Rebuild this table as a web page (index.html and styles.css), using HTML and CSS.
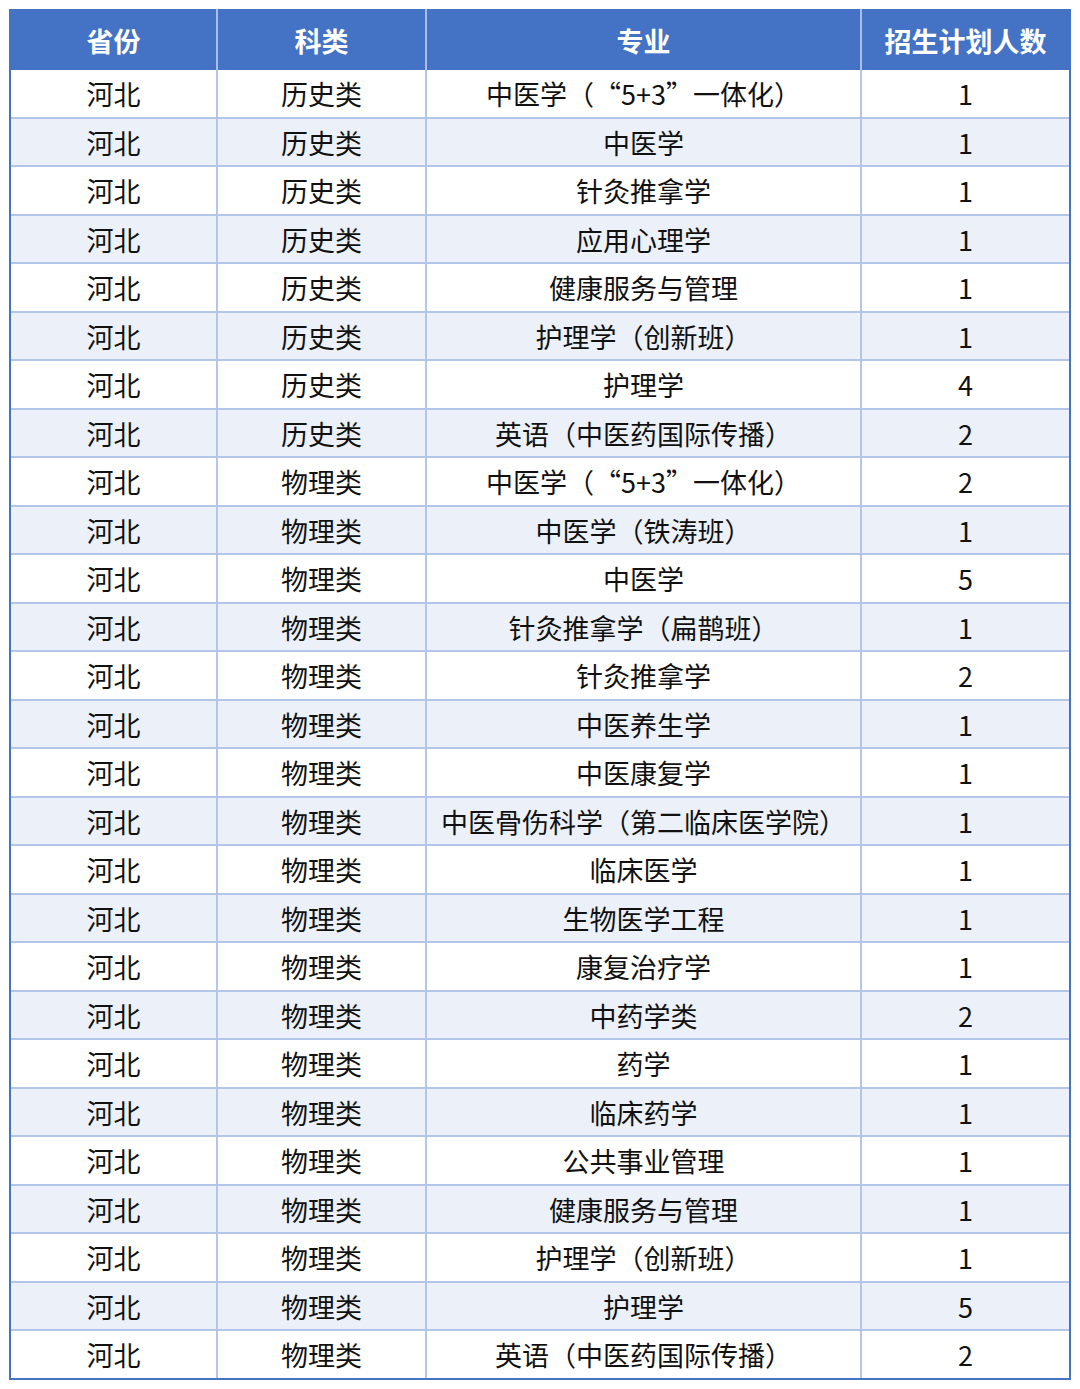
FILE: index.html
```html
<!DOCTYPE html>
<html lang="zh-CN">
<head>
<meta charset="utf-8">
<title>招生计划</title>
<link rel="stylesheet" href="styles.css">
</head>
<body>
<div class="table">
  <div class="row head"><div class="c">省份</div><div class="c">科类</div><div class="c">专业</div><div class="c">招生计划人数</div></div>
  <div class="row"><div class="c">河北</div><div class="c">历史类</div><div class="c">中医学（<span class="qo">“</span>5+3<span class="qc">”</span>一体化）</div><div class="c">1</div></div>
  <div class="row"><div class="c">河北</div><div class="c">历史类</div><div class="c">中医学</div><div class="c">1</div></div>
  <div class="row"><div class="c">河北</div><div class="c">历史类</div><div class="c">针灸推拿学</div><div class="c">1</div></div>
  <div class="row"><div class="c">河北</div><div class="c">历史类</div><div class="c">应用心理学</div><div class="c">1</div></div>
  <div class="row"><div class="c">河北</div><div class="c">历史类</div><div class="c">健康服务与管理</div><div class="c">1</div></div>
  <div class="row"><div class="c">河北</div><div class="c">历史类</div><div class="c">护理学（创新班）</div><div class="c">1</div></div>
  <div class="row"><div class="c">河北</div><div class="c">历史类</div><div class="c">护理学</div><div class="c">4</div></div>
  <div class="row"><div class="c">河北</div><div class="c">历史类</div><div class="c">英语（中医药国际传播）</div><div class="c">2</div></div>
  <div class="row"><div class="c">河北</div><div class="c">物理类</div><div class="c">中医学（<span class="qo">“</span>5+3<span class="qc">”</span>一体化）</div><div class="c">2</div></div>
  <div class="row"><div class="c">河北</div><div class="c">物理类</div><div class="c">中医学（铁涛班）</div><div class="c">1</div></div>
  <div class="row"><div class="c">河北</div><div class="c">物理类</div><div class="c">中医学</div><div class="c">5</div></div>
  <div class="row"><div class="c">河北</div><div class="c">物理类</div><div class="c">针灸推拿学（扁鹊班）</div><div class="c">1</div></div>
  <div class="row"><div class="c">河北</div><div class="c">物理类</div><div class="c">针灸推拿学</div><div class="c">2</div></div>
  <div class="row"><div class="c">河北</div><div class="c">物理类</div><div class="c">中医养生学</div><div class="c">1</div></div>
  <div class="row"><div class="c">河北</div><div class="c">物理类</div><div class="c">中医康复学</div><div class="c">1</div></div>
  <div class="row"><div class="c">河北</div><div class="c">物理类</div><div class="c">中医骨伤科学（第二临床医学院）</div><div class="c">1</div></div>
  <div class="row"><div class="c">河北</div><div class="c">物理类</div><div class="c">临床医学</div><div class="c">1</div></div>
  <div class="row"><div class="c">河北</div><div class="c">物理类</div><div class="c">生物医学工程</div><div class="c">1</div></div>
  <div class="row"><div class="c">河北</div><div class="c">物理类</div><div class="c">康复治疗学</div><div class="c">1</div></div>
  <div class="row"><div class="c">河北</div><div class="c">物理类</div><div class="c">中药学类</div><div class="c">2</div></div>
  <div class="row"><div class="c">河北</div><div class="c">物理类</div><div class="c">药学</div><div class="c">1</div></div>
  <div class="row"><div class="c">河北</div><div class="c">物理类</div><div class="c">临床药学</div><div class="c">1</div></div>
  <div class="row"><div class="c">河北</div><div class="c">物理类</div><div class="c">公共事业管理</div><div class="c">1</div></div>
  <div class="row"><div class="c">河北</div><div class="c">物理类</div><div class="c">健康服务与管理</div><div class="c">1</div></div>
  <div class="row"><div class="c">河北</div><div class="c">物理类</div><div class="c">护理学（创新班）</div><div class="c">1</div></div>
  <div class="row"><div class="c">河北</div><div class="c">物理类</div><div class="c">护理学</div><div class="c">5</div></div>
  <div class="row"><div class="c">河北</div><div class="c">物理类</div><div class="c">英语（中医药国际传播）</div><div class="c">2</div></div>
</div>
</body>
</html>
```
FILE: styles.css
```css
html, body {
  margin: 0;
  padding: 0;
  background: #ffffff;
}
body {
  padding: 9px 9px 0 9px;
  font-family: "Noto Sans CJK SC", "Noto Sans", sans-serif;
  color: #111111;
}
.table {
  width: 1062px;
  box-sizing: border-box;
  border-left: 2px solid #4472c4;
  border-right: 2px solid #4472c4;
  border-bottom: 2px solid #4472c4;
  display: flex;
  flex-direction: column;
}
.row {
  display: grid;
  grid-template-columns: 207px 209px 435px 1fr;
  height: 48.5px;
  box-sizing: border-box;
  border-bottom: 2px solid #b4c6e7;
}
.row:nth-child(odd) {
  background: #ebf0f9;
}
.row:last-child {
  border-bottom: none;
  height: 46.5px;
}
.row.head {
  height: 61px;
  background: #4472c4;
  border-bottom: none;
  color: #ffffff;
  font-weight: 700;
}
.c {
  display: flex;
  align-items: center;
  justify-content: center;
  font-size: 27px;
  line-height: 1;
  white-space: nowrap;
  padding-top: 1px;
  border-right: 2px solid #b4c6e7;
}
.c:last-child {
  border-right: none;
}
.head .c {
  border-right-color: #a9bde6;
}
.qo,
.qc {
  display: inline-block;
  width: 1em;
}
.qo {
  text-align: right;
}
.qc {
  text-align: left;
}
```
